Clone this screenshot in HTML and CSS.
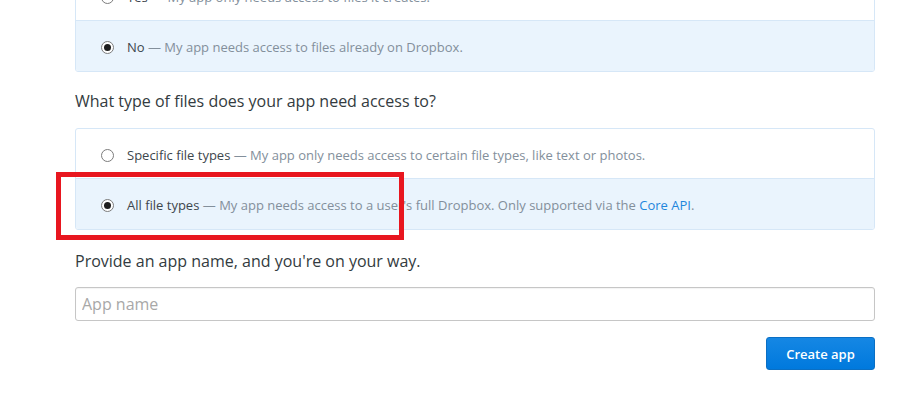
FILE: index.html
```html
<!DOCTYPE html>
<html lang="en">

<head>
    <meta charset="UTF-8">
    <meta name="viewport" content="width=device-width, initial-scale=1.0">
    <title>Create app</title>
    <link rel="stylesheet" href="styles.css">
</head>

<body>

    <div class="page">

        <div class="choice-box first-box">
            <div class="choice-row">
                <span class="radio"></span>
                <span class="label">Yes</span>
                <span class="desc">&nbsp;&mdash; My app only needs access to files it creates.</span>
            </div>
            <div class="choice-row selected">
                <span class="radio checked"></span>
                <span class="label">No</span>
                <span class="desc">&nbsp;&mdash; My app needs access to files already on Dropbox.</span>
            </div>
        </div>

        <h2 class="question">What type of files does your app need access to?</h2>

        <div class="choice-box">
            <div class="choice-row">
                <span class="radio"></span>
                <span class="label">Specific file types</span>
                <span class="desc">&nbsp;&mdash; My app only needs access to certain file types, like text or photos.</span>
            </div>
            <div class="choice-row selected">
                <span class="radio checked"></span>
                <span class="label">All file types</span>
                <span class="desc">&nbsp;&mdash; My app needs access to a user's full Dropbox. Only supported via the <a href="#">Core API</a>.</span>
            </div>
        </div>

        <h2 class="question second">Provide an app name, and you're on your way.</h2>

        <input type="text" class="app-name" placeholder="App name">

        <div class="actions">
            <button class="create-btn">Create app</button>
        </div>

        <!-- annotation -->
        <div class="highlight"></div>

    </div>

</body>

</html>
```

FILE: styles.css
```css
body {
    margin: 0;
    padding: 0;
    background-color: #ffffff;
    font-family: 'Open Sans', sans-serif;
    color: #3d464d;
}

.page {
    position: relative;
    display: flow-root;
    width: 800px;
    margin-left: 75px;
}

.choice-box {
    border: 1px solid #d6e7f7;
    border-radius: 3px;
    overflow: hidden;
}

.first-box {
    margin-top: -30px;
}

.choice-row {
    display: flex;
    align-items: center;
    height: 18px;
    padding: 17px 0 14px 25px;
    font-size: 13px;
    line-height: 18px;
    white-space: nowrap;
}

.choice-row + .choice-row {
    border-top: 1px solid #d6e7f7;
    padding-bottom: 15px;
}

.choice-row.selected {
    background-color: #eaf4fd;
}

.radio {
    position: relative;
    flex: none;
    width: 11px;
    height: 11px;
    margin-right: 13px;
    border: 1px solid #7c7c7c;
    border-radius: 50%;
    background-color: #ffffff;
}

.radio.checked::after {
    content: '';
    position: absolute;
    left: 2px;
    top: 2px;
    width: 7px;
    height: 7px;
    border-radius: 50%;
    background-color: #1e1e1e;
}

.label {
    color: #3d464d;
}

.desc {
    color: #838f9b;
}

.desc a {
    color: #1f86dc;
    text-decoration: none;
}

.question {
    margin: 18px 0 16px;
    font-size: 16px;
    font-weight: normal;
    line-height: 22px;
    color: #333b40;
}

.question.second {
    margin: 20px 0 15px;
}

.app-name {
    display: block;
    box-sizing: border-box;
    width: 800px;
    height: 34px;
    padding: 0 6px;
    border: 1px solid #c6c6c6;
    border-radius: 3px;
    box-shadow: inset 0 1px 1px rgba(0, 0, 0, 0.05);
    font-family: 'Open Sans', sans-serif;
    font-size: 16px;
    color: #333;
}

.app-name::placeholder {
    color: #a8a8a8;
}

.actions {
    display: flex;
    justify-content: flex-end;
    margin-top: 16px;
}

.create-btn {
    box-sizing: border-box;
    width: 109px;
    height: 33px;
    border: 1px solid #0a6fc4;
    border-radius: 3px;
    background: linear-gradient(#1587e4, #0079dd);
    color: #ffffff;
    font-family: 'Open Sans', sans-serif;
    font-size: 13px;
    font-weight: 600;
    cursor: pointer;
}

.highlight {
    position: absolute;
    left: -19px;
    top: 172px;
    box-sizing: border-box;
    width: 348px;
    height: 68px;
    border: 5px solid #e8161f;
}
```
